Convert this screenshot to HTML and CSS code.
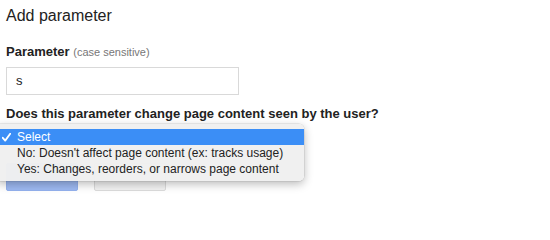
FILE: index.html
```html
<!DOCTYPE html>
<html>
<head>
<meta charset="utf-8">
<link rel="stylesheet" href="styles.css">
</head>
<body>
<div class="page">
  <h1 class="title">Add parameter</h1>
  <div class="label">Parameter <span class="hint">(case sensitive)</span></div>
  <div class="input">s</div>
  <div class="question">Does this parameter change page content seen by the user?</div>
  <div class="select-slot"></div>
  <div class="buttons">
    <div class="btn btn-primary"></div>
    <div class="btn btn-secondary"></div>
  </div>
</div>
<div class="menu">
  <div class="item selected">
    <svg class="check" width="9" height="9" viewBox="0 0 9 9"><path d="M0.8 4.8 L3.2 7.6 L8.2 0.8" fill="none" stroke="#fff" stroke-width="1.8" stroke-linecap="round" stroke-linejoin="round"/></svg>
    Select
  </div>
  <div class="item">No: Doesn't affect page content (ex: tracks usage)</div>
  <div class="item">Yes: Changes, reorders, or narrows page content</div>
</div>
</body>
</html>
```
FILE: styles.css
```css
html, body {
  margin: 0;
  padding: 0;
  background: #fff;
  font-family: "Liberation Sans", Arial, sans-serif;
  color: #222;
}
.page {
  padding: 0 6px;
}
.title {
  margin: 5px 0 0;
  font-size: 16px;
  font-weight: normal;
  line-height: 22px;
  color: #222;
}
.label {
  margin-top: 17px;
  font-size: 13px;
  font-weight: bold;
  line-height: 16px;
  color: #222;
}
.hint {
  font-size: 11px;
  font-weight: normal;
  color: #777;
}
.input {
  box-sizing: border-box;
  margin-top: 7px;
  width: 233px;
  height: 28px;
  border: 1px solid #d9d9d9;
  padding: 0 9px;
  font-size: 13px;
  line-height: 26px;
  color: #222;
}
.question {
  margin-top: 11px;
  font-size: 13px;
  font-weight: bold;
  line-height: 16px;
}
.select-slot {
  height: 41px;
}
.buttons {
  display: flex;
  gap: 16px;
}
.btn {
  box-sizing: border-box;
  width: 72px;
  height: 28px;
  border-radius: 2px;
}
.btn-primary {
  background: #9db9f2;
  border: 1px solid #93b1ee;
}
.btn-secondary {
  background: #f3f3f3;
  border: 1px solid #dcdcdc;
}
.menu {
  position: absolute;
  left: -4px;
  top: 124px;
  width: 308px;
  box-sizing: border-box;
  padding: 5px 0 4px;
  background: rgba(240, 240, 240, 0.97);
  border-radius: 5px;
  box-shadow: 0 3px 10px rgba(0, 0, 0, 0.28), 0 0 0 0.5px rgba(0, 0, 0, 0.12);
  font-size: 12px;
  color: #222;
}
.item {
  position: relative;
  height: 16px;
  line-height: 16px;
  padding-left: 21px;
  white-space: nowrap;
}
.item.selected {
  background: #3b8ef6;
  color: #fff;
}
.check {
  position: absolute;
  left: 6px;
  top: 4px;
}
```
